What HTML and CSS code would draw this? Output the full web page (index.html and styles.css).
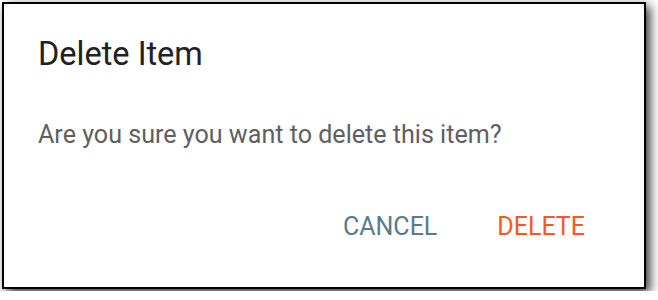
FILE: index.html
```html
<!DOCTYPE html>
<html>
<head>
<meta charset="utf-8">
<link rel="stylesheet" href="styles.css">
</head>
<body>
<div class="dialog">
  <h2 class="title">Delete Item</h2>
  <p class="message">Are you sure you want to delete this item?</p>
  <div class="actions">
    <button class="btn btn-cancel">CANCEL</button>
    <button class="btn btn-delete">DELETE</button>
  </div>
</div>
</body>
</html>
```

FILE: styles.css
```css
html, body {
  margin: 0;
  padding: 0;
  background: #ffffff;
}
body {
  padding: 2px;
  font-family: Roboto, "Liberation Sans", sans-serif;
}
.dialog {
  box-sizing: border-box;
  width: 644px;
  height: 287px;
  background: #ffffff;
  border: 2px solid #000000;
  box-shadow: 4px 4px 10px rgba(0, 0, 0, 0.8);
  padding: 31px 0 0 34px;
  display: flex;
  flex-direction: column;
}
.title {
  margin: 0;
  font-size: 32.5px;
  line-height: 38px;
  font-weight: 400;
  color: #212121;
}
.message {
  margin: 47px 0 0 0;
  font-size: 25.1px;
  line-height: 30px;
  color: #5f5f5f;
}
.actions {
  margin-top: 62px;
  display: flex;
  justify-content: flex-end;
  padding-right: 29px;
}
.btn {
  border: none;
  background: transparent;
  font-family: inherit;
  font-size: 25px;
  line-height: 30px;
  padding: 0 30px;
  margin: 0;
  cursor: pointer;
}
.btn-cancel {
  color: #5b7b8a;
}
.btn-delete {
  color: #ff5722;
}
```
